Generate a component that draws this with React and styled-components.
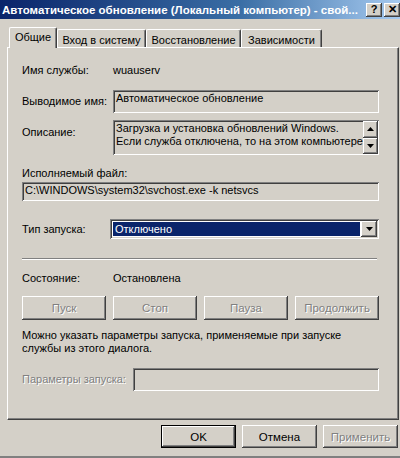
import React from 'react';
import styled, { createGlobalStyle } from 'styled-components';

const GlobalStyle = createGlobalStyle`
	html, body {
		margin: 0;
		padding: 0;
		background: #d4d0c8;
	}
	body {
		font-family: 'Liberation Sans', Arial, sans-serif;
		font-size: 11px;
		color: #000;
	}
`;

const raised = `
	box-shadow: inset -1px -1px #404040, inset 1px 1px #fff, inset -2px -2px #808080, inset 2px 2px #d4d0c8;
`;

const sunken = `
	box-shadow: inset 1px 1px #808080, inset -1px -1px #fff, inset 2px 2px #404040, inset -2px -2px #d4d0c8;
`;

const Window = styled.div`
	width: 400px;
	height: 458px;
	box-sizing: border-box;
	background: #d4d0c8;
	border-bottom: 2px solid #808080;
	display: flex;
	flex-direction: column;
	overflow: hidden;
`;

const TitleBar = styled.div`
	height: 19px;
	display: flex;
	align-items: center;
	padding-left: 2px;
	background: linear-gradient(to right, #0a246a 0%, #3a6ea5 60%, #a6caf0 100%);
	color: #fff;
	font-weight: bold;
	font-size: 11.5px;
`;

const TitleText = styled.span`
	flex: 1;
	white-space: nowrap;
	overflow: hidden;
`;

const TitleButton = styled.div`
	width: 16px;
	height: 14px;
	margin-left: 2px;
	flex-shrink: 0;
	background: #d4d0c8;
	${raised}
	color: #000;
	font-size: 11px;
	font-weight: bold;
	display: flex;
	align-items: center;
	justify-content: center;
	line-height: 1;
`;

const Body = styled.div`
	flex: 1;
	display: flex;
	flex-direction: column;
	padding: 8px 1px 0 7px;
`;

const TabStrip = styled.div`
	display: flex;
	align-items: flex-end;
	height: 20px;
	padding-left: 2px;
`;

const Tab = styled.div`
	width: ${(p) => p.$w}px;
	box-sizing: border-box;
	height: ${(p) => (p.$active ? 21 : 18)}px;
	margin-bottom: ${(p) => (p.$active ? -1 : 0)}px;
	padding-top: ${(p) => (p.$active ? 3 : 4)}px;
	text-align: center;
	line-height: 13px;
	white-space: nowrap;
	background: #d4d0c8;
	border-top: 1px solid #fff;
	border-left: 1px solid #fff;
	border-right: 1px solid #404040;
	border-radius: 2px 2px 0 0;
	box-shadow: inset -1px 0 #808080;
	position: relative;
	z-index: ${(p) => (p.$active ? 2 : 1)};
`;

const Panel = styled.div`
	height: 373px;
	box-sizing: border-box;
	border-top: 1px solid #fff;
	border-left: 1px solid #fff;
	border-right: 1px solid #404040;
	border-bottom: 1px solid #404040;
	box-shadow: inset -1px -1px #808080;
	padding: 16px 19px 0 14px;
	display: flex;
	flex-direction: column;
`;

const Row = styled.div`
	display: flex;
	align-items: ${(p) => p.$align || 'center'};
	margin-top: ${(p) => p.$mt || 0}px;
`;

const Label = styled.div`
	width: ${(p) => p.$w || 91}px;
	flex-shrink: 0;
	line-height: 13px;
	white-space: nowrap;
	padding-top: ${(p) => p.$pt || 0}px;
	color: ${(p) => (p.$disabled ? '#808080' : '#000')};
	text-shadow: ${(p) => (p.$disabled ? '1px 1px #fff' : 'none')};
`;

const Text = styled.div`
	line-height: 13px;
	white-space: nowrap;
	margin-top: ${(p) => p.$mt || 0}px;
`;

const Field = styled.div`
	flex: 1;
	height: ${(p) => p.$h}px;
	box-sizing: border-box;
	${sunken}
	padding: 2px 3px;
	line-height: 13px;
	white-space: nowrap;
	overflow: hidden;
	display: flex;
`;

const FieldLines = styled.div`
	flex: 1;
	overflow: hidden;
`;

const ScrollBar = styled.div`
	width: 15px;
	display: flex;
	flex-direction: column;
	margin: -1px -2px -1px 0;
`;

const ArrowButton = styled.div`
	flex: 1;
	background: #d4d0c8;
	${raised}
	display: flex;
	align-items: center;
	justify-content: center;
`;

const Combo = styled.div`
	flex: 1;
	height: 20px;
	box-sizing: border-box;
	${sunken}
	background: #fff;
	padding: 2px;
	display: flex;
	gap: 1px;
`;

const Selection = styled.div`
	flex: 1;
	background: #0a246a;
	color: #fff;
	line-height: 14px;
	padding-left: 2px;
	margin: 1px 0 1px 1px;
`;

const DropButton = styled.div`
	width: 16px;
	background: #d4d0c8;
	${raised}
	display: flex;
	align-items: center;
	justify-content: center;
`;

const Separator = styled.div`
	margin: 19px 2px 0 0;
	border-top: 1px solid #808080;
	border-bottom: 1px solid #fff;
	height: 0;
`;

const ButtonRow = styled.div`
	display: flex;
	justify-content: space-between;
	margin-top: ${(p) => p.$mt || 0}px;
`;

const Button = styled.div`
	width: ${(p) => p.$w}px;
	height: ${(p) => p.$h}px;
	box-sizing: border-box;
	background: #d4d0c8;
	${raised}
	${(p) =>
		p.$default &&
		`border: 1px solid #000;
		box-shadow: inset -1px -1px #404040, inset 1px 1px #fff, inset -2px -2px #808080;`}
	display: flex;
	align-items: center;
	justify-content: center;
	color: ${(p) => (p.$disabled ? '#808080' : '#000')};
	text-shadow: ${(p) => (p.$disabled ? '1px 1px #fff' : 'none')};
	font-size: 11.5px;
`;

const Footer = styled.div`
	display: flex;
	justify-content: flex-end;
	gap: 6px;
	margin-top: 5px;
	padding-right: 1px;
`;

const Triangle = ({ down }) => (
	<svg width='7' height='4' viewBox='0 0 7 4'>
		{down ? <path d='M0 0h7L3.5 4z' fill='#000' /> : <path d='M0 4h7L3.5 0z' fill='#000' />}
	</svg>
);

const App = () => {
	return (
		<>
			<GlobalStyle />
			<Window>
				<TitleBar>
					<TitleText>Автоматическое обновление (Локальный компьютер) - свой...</TitleText>
					<TitleButton>?</TitleButton>
					<TitleButton>✕</TitleButton>
				</TitleBar>
				<Body>
					<TabStrip>
						<Tab $w={48} $active>
							Общие
						</Tab>
						<Tab $w={89}>Вход в систему</Tab>
						<Tab $w={95}>Восстановление</Tab>
						<Tab $w={81}>Зависимости</Tab>
					</TabStrip>
					<Panel>
						<Row>
							<Label>Имя службы:</Label>
							<Text>wuauserv</Text>
						</Row>
						<Row $mt={13}>
							<Label>Выводимое имя:</Label>
							<Field $h={23}>Автоматическое обновление</Field>
						</Row>
						<Row $mt={7} $align='flex-start'>
							<Label $pt={6}>Описание:</Label>
							<Field $h={35}>
								<FieldLines>
									<div>Загрузка и установка обновлений Windows.</div>
									<div>Если служба отключена, то на этом компьютере</div>
								</FieldLines>
								<ScrollBar>
									<ArrowButton>
										<Triangle />
									</ArrowButton>
									<ArrowButton>
										<Triangle down />
									</ArrowButton>
								</ScrollBar>
							</Field>
						</Row>
						<Text $mt={12}>Исполняемый файл:</Text>
						<Row $mt={2}>
							<Field $h={19}>C:\WINDOWS\system32\svchost.exe -k netsvcs</Field>
						</Row>
						<Row $mt={18}>
							<Label $w={88}>Тип запуска:</Label>
							<Combo>
								<Selection>Отключено</Selection>
								<DropButton>
									<Triangle down />
								</DropButton>
							</Combo>
						</Row>
						<Separator />
						<Row $mt={12}>
							<Label>Состояние:</Label>
							<Text>Остановлена</Text>
						</Row>
						<ButtonRow $mt={11}>
							<Button $w={84} $h={24} $disabled>
								Пуск
							</Button>
							<Button $w={84} $h={24} $disabled>
								Стоп
							</Button>
							<Button $w={84} $h={24} $disabled>
								Пауза
							</Button>
							<Button $w={84} $h={24} $disabled>
								Продолжить
							</Button>
						</ButtonRow>
						<Text $mt={9}>
							Можно указать параметры запуска, применяемые при запуске
							<br />
							службы из этого диалога.
						</Text>
						<Row $mt={13}>
							<Label $w={111} $disabled>
								Параметры запуска:
							</Label>
							<Field $h={23} />
						</Row>
					</Panel>
					<Footer>
						<Button $w={75} $h={23} $default>
							OK
						</Button>
						<Button $w={75} $h={23}>
							Отмена
						</Button>
						<Button $w={75} $h={23} $disabled>
							Применить
						</Button>
					</Footer>
				</Body>
			</Window>
		</>
	);
};

export default App;
